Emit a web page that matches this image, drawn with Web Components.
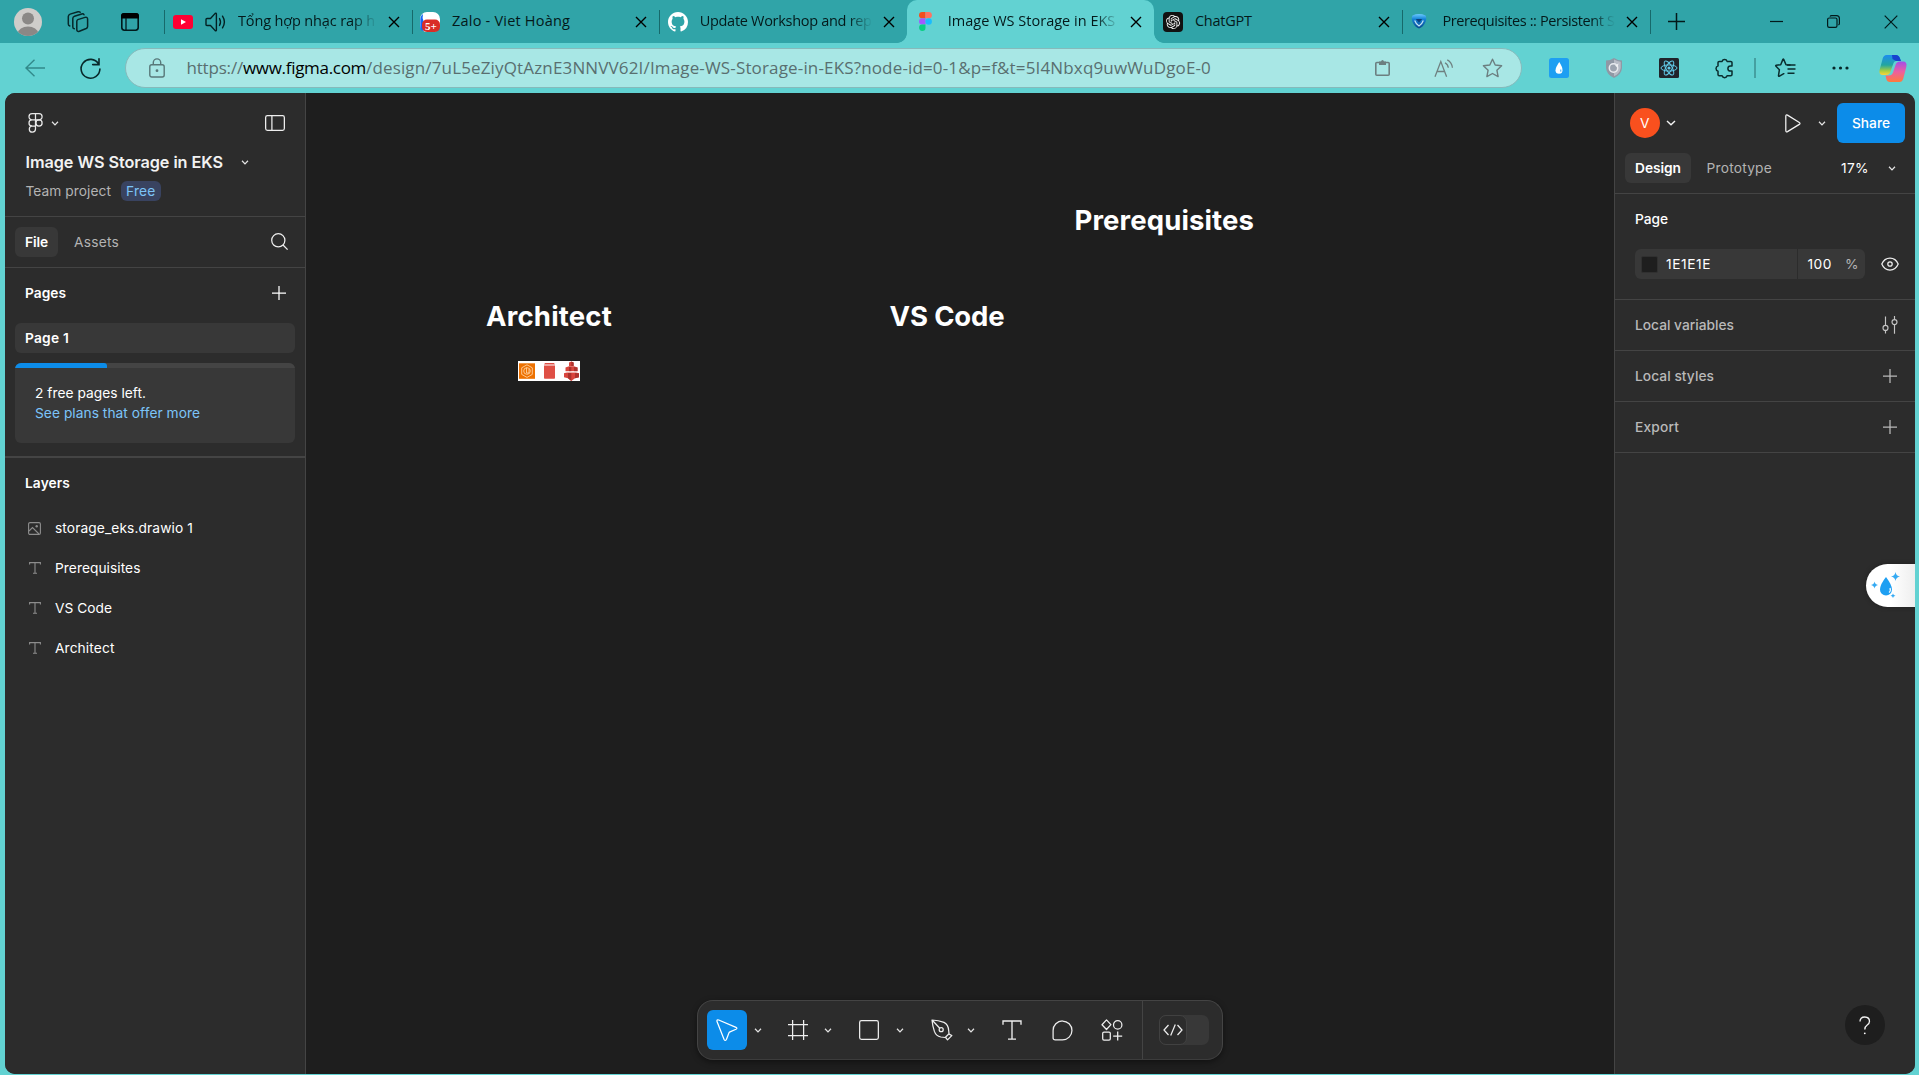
<!DOCTYPE html>
<html lang="en">
<head>
<meta charset="utf-8">
<title>Image WS Storage in EKS</title>
<style>
html,body{margin:0;height:100%;overflow:hidden;background:#62d2d2}
body{font-family:Inter,"Liberation Sans",sans-serif}
</style>
</head>
<body>
<design-window></design-window>
<script>
const ICONS = {
  user:[28,28,'<defs><clipPath id="c"><circle cx="14" cy="14" r="14"/></clipPath></defs><circle cx="14" cy="14" r="14" fill="#cfcdca"/><g clip-path="url(#c)" fill="#8b8886"><circle cx="14" cy="10.5" r="6"/><ellipse cx="14" cy="25" rx="10" ry="6.5"/></g>'],
  workspaces:[22,22,'<g fill="none" stroke="#06282a" stroke-width="1.5" stroke-linejoin="round" stroke-linecap="round"><path d="M10.8 8.6 18 6.4q2.6-.7 2.6 1.8v7.2q0 1.5-1.4 2.1l-6.8 2.7q-2.6.8-2.6-1.8v-8q0-1.4 1-1.8z"/><path d="M17 3.8q-.6-1.3-2.3-.8L7.5 5.300q-1.700.6-1.700 2.300v8.300q0 1.600 1.500 1.800"/><path d="M13.200 1.300q-.8-.9-2.200-.500L3.100 3.100Q1.300 3.700 1.300 5.500v7.500q0 1.600 1.500 1.900"/></g>'],
  vtabs:[18,18,'<rect x=".8" y=".8" width="16.400" height="16.400" rx="2.600" fill="none" stroke="#001a1c" stroke-width="1.600"/><path d="M0 5.500V3a3 3 0 0 1 3-3h12a3 3 0 0 1 3 3v2.500z" fill="#000"/><path d="M5 5v12" stroke="#001a1c" stroke-width="1.300"/>'],
  youtube:[20,14,'<rect width="20" height="14" rx="3" fill="#ff0033"/><path d="M8 4.200v5.600L13 7z" fill="#fff"/>'],
  speaker:[21,20,'<g fill="none" stroke="#032022" stroke-width="1.400" stroke-linejoin="round" stroke-linecap="round"><path d="M1 7.500q0-1 1-1h3.500L10.200 1.400q1-.8 1.200.4v16.400q-.2 1.200-1.200.4L5.500 13.500H2q-1 0-1-1z"/><path d="M14.500 6.500q2 3.500 0 7M17.500 4.200q3.800 5.800 0 11.600"/></g>'],
  close:[12,12,'<path d="M1 1l10 10M11 1 1 11" stroke="#000" stroke-width="1.400" fill="none"/>'],
  zalo:[20,20,'<rect width="20" height="20" rx="7" fill="#fff"/><path d="M3 2Q0 4 .3 9v7Q1 19 3.500 19V9Q2 6 3 2z" fill="#1468f5"/><rect x="2" y="7.500" width="18" height="12.500" rx="5" fill="#d92d27"/><text x="11" y="17.600" text-anchor="middle" font-family="Liberation Serif,serif" font-weight="700" font-size="11" fill="#fff">5+</text>'],
  github:[20,20,'<path transform="scale(1.25)" fill="#fff" d="M8 0C3.580 0 0 3.580 0 8c0 3.540 2.290 6.530 5.470 7.590.4.070.55-.17.55-.38 0-.19-.01-.82-.01-1.490-2.010.37-2.530-.49-2.690-.94-.09-.23-.48-.94-.82-1.130-.28-.15-.68-.52-.01-.53.63-.01 1.080.58 1.230.82.72 1.210 1.870.87 2.330.66.070-.52.28-.87.51-1.070-1.780-.2-3.640-.89-3.640-3.950 0-.87.31-1.590.82-2.150-.08-.2-.36-1.020.08-2.120 0 0 .67-.21 2.200.82.64-.18 1.320-.27 2-.27s1.360.09 2 .27c1.530-1.040 2.200-.82 2.200-.82.44 1.100.16 1.920.08 2.120.51.56.82 1.270.82 2.150 0 3.070-1.870 3.750-3.650 3.950.29.25.54.73.54 1.480 0 1.070-.01 1.930-.01 2.200 0 .21.15.46.55.38A8.010 8.010 0 0 0 16 8c0-4.420-3.580-8-8-8z"/>'],
  figma:[13,19,'<path d="M3.200 0h3.300v6.300H3.200a3.150 3.150 0 0 1 0-6.300z" fill="#f24e1e"/><path d="M6.500 0h3.200a3.150 3.150 0 0 1 0 6.300H6.500z" fill="#ff7262"/><path d="M3.200 6.300h3.300v6.300H3.200a3.150 3.150 0 0 1 0-6.300z" fill="#a259ff"/><circle cx="9.700" cy="9.450" r="3.200" fill="#1abcfe"/><path d="M3.200 12.600h3.300v3.200a3.200 3.200 0 1 1-3.300-3.200z" fill="#0acf83"/>'],
  gpt:[20,20,'<rect width="20" height="20" rx="4" fill="#111"/><path transform="translate(2.900 2.900) scale(.592)" fill="#f2f2f2" d="M22.282 9.821a5.985 5.985 0 0 0-.516-4.910 6.046 6.046 0 0 0-6.510-2.900A6.065 6.065 0 0 0 4.981 4.182a5.985 5.985 0 0 0-3.998 2.900 6.046 6.046 0 0 0 .743 7.097 5.980 5.980 0 0 0 .511 4.911 6.051 6.051 0 0 0 6.515 2.900A5.985 5.985 0 0 0 13.260 24a6.056 6.056 0 0 0 5.772-4.206 5.990 5.990 0 0 0 3.998-2.900 6.056 6.056 0 0 0-.747-7.073zM13.260 22.430a4.476 4.476 0 0 1-2.876-1.040l.141-.081 4.779-2.758a.795.795 0 0 0 .393-.681v-6.737l2.020 1.169a.071.071 0 0 1 .038.052v5.583a4.504 4.504 0 0 1-4.495 4.493zM3.600 18.304a4.470 4.470 0 0 1-.535-3.014l.142.085 4.783 2.759a.771.771 0 0 0 .780 0l5.843-3.369v2.332a.080.080 0 0 1-.033.062L9.740 19.950a4.500 4.500 0 0 1-6.140-1.646zM2.341 7.896a4.485 4.485 0 0 1 2.365-1.973V11.600a.766.766 0 0 0 .388.677l5.814 3.354-2.020 1.169a.076.076 0 0 1-.071 0l-4.830-2.787A4.504 4.504 0 0 1 2.341 7.872zm16.596 3.856-5.833-3.387L15.119 7.200a.076.076 0 0 1 .071 0l4.830 2.791a4.494 4.494 0 0 1-.676 8.105v-5.678a.790.790 0 0 0-.407-.667zm2.010-3.024-.141-.085-4.774-2.782a.776.776 0 0 0-.785 0L9.409 9.230V6.897a.066.066 0 0 1 .028-.062l4.830-2.787a4.499 4.499 0 0 1 6.680 4.660zM8.307 12.863l-2.020-1.164a.080.080 0 0 1-.038-.057V6.074a4.499 4.499 0 0 1 7.376-3.454l-.142.081-4.778 2.758a.795.795 0 0 0-.393.681zm1.097-2.366 2.602-1.500 2.607 1.500v2.999l-2.597 1.500-2.607-1.500z"/>'],
  shieldv:[16,18,'<defs><linearGradient id="g" x2="0" y2="1"><stop stop-color="#69c8ff"/><stop offset=".35" stop-color="#1583d6"/><stop offset="1" stop-color="#06488e"/></linearGradient></defs><path d="M1.500 2.500Q8-.3 14.500 2.500q1.500 2.500 0 6.500-2.200 5-6.500 6.500Q3.700 14 1.500 9 0 5 1.500 2.500z" fill="url(#g)"/><path d="M3.700 7.500q1.300 3.700 4.300 5.500 3-1.800 4.300-5.500" fill="none" stroke="#c4e2f5" stroke-width="1.200"/><path d="M4.800 6h6.400L8 9.500z" fill="#083f7d"/>'],
  newtab:[17,17,'<path d="M8.500 0v17M0 8.500h17" stroke="#02191a" stroke-width="1.500"/>'],
  minimize:[13,13,'<path d="M0 6.500h13" stroke="#02191a" stroke-width="1.200"/>'],
  restore:[13,13,'<rect x=".6" y="3" width="9.400" height="9.400" rx="1.600" fill="none" stroke="#02191a" stroke-width="1.200"/><path d="M3 1.600Q3.400.6 4.600.6H9.500Q12.400.6 12.400 3.500v5q0 1-1 1.500" fill="none" stroke="#02191a" stroke-width="1.200"/>'],
  winclose:[14,14,'<path d="M.7.7l12.600 12.600M13.300.7.7 13.300" stroke="#02191a" stroke-width="1.200"/>'],
  back:[20,18,'<path d="M9.500.8 1 9l8.500 8.200M1 9h19" fill="none" stroke="#32898a" stroke-width="1.400"/>'],
  reload:[21,21,'<path d="M18.600 6A9.400 9.400 0 1 0 19.900 11M19 .800v5.800h-6.300" fill="none" stroke="#08282a" stroke-width="1.600" stroke-linecap="round"/>'],
  lock:[16,20,'<g fill="none" stroke="#587879" stroke-width="1.400"><rect x=".8" y="6.700" width="14.400" height="12.300" rx="2"/><path d="M4.300 6.700V4.600a3.700 3.700 0 0 1 7.400 0v2.100"/></g><circle cx="8" cy="12.700" r="1.400" fill="#587879"/>'],
  clip:[15,16,'<rect x=".8" y="2.500" width="13.400" height="12.700" rx="1" fill="none" stroke="#6c7f80" stroke-width="1.600"/><path d="M4 1.500h2Q6.300 0 7.500 0T9 1.500h2V5H4z" fill="#6c7f80"/>'],
  read:[20,19,'<g fill="none" stroke="#6f8080" stroke-width="1.300"><path d="M1 17.800 6.800 2.500l5.800 15.300M3 12.500h7.600M11 3.800q3 1.700 3.300 5M13.300.8q4.600 2.400 5.100 8"/></g>'],
  star:[21,20,'<path d="M10.500 1.200 13.200 7l6.400.8-4.700 4.400 1.200 6.400-5.600-3.100-5.600 3.100 1.200-6.400L1.400 7.800 7.800 7z" fill="none" stroke="#6c7f80" stroke-width="1.400" stroke-linejoin="round"/>'],
  drop:[20,20,'<rect width="20" height="20" rx="2.500" fill="#1e9ff2"/><path d="M10.300 4q3.200 5 3.200 8.200a3.500 3.500 0 0 1-7 0Q6.700 9 10.300 4z" fill="#fff"/><path d="M11.800 11.500v2.200" stroke="#1e9ff2" stroke-width=".9"/>'],
  shield:[16,20,'<path d="M8 0q4 2.500 8 2.500V10q-.5 6.500-8 10Q.500 16.500 0 10V2.500Q4 2.500 8 0z" fill="#8f98a5"/><path d="M8 1.500q3.500 2 6.700 2.200V10q-.7 5.300-6.700 8.300z" fill="#b7bcc6"/><circle cx="7.500" cy="10" r="4.200" fill="#9ba3af" stroke="#e8ebef" stroke-width="1.500"/><path d="M9 7.500l3.500-2-1 4z" fill="#eef0f3"/>'],
  react:[20,20,'<rect width="20" height="20" rx="1.500" fill="#20232a"/><g fill="none" stroke="#61c9e8" stroke-width="1"><ellipse cx="10" cy="10" rx="8" ry="3.100"/><ellipse cx="10" cy="10" rx="8" ry="3.100" transform="rotate(60 10 10)"/><ellipse cx="10" cy="10" rx="8" ry="3.100" transform="rotate(120 10 10)"/></g><circle cx="10" cy="10" r="1.600" fill="#61c9e8"/>'],
  puzzle:[19,21,'<path d="M4.200 3.400h2.900a2.600 2.600 0 0 1 5 0h3.600q1.300 0 1.300 1.200v3.300h-1.500a2.600 2.600 0 0 0 0 5.200H17v3.500q0 1.200-1.300 1.200h-3.600a2.600 2.600 0 0 1-5 0H4.200Q3 17.800 3 16.600v-3.500a2.700 2.700 0 0 1 0-5.200V4.600q0-1.200 1.200-1.200z" fill="none" stroke="#0a2d2e" stroke-width="1.500" stroke-linejoin="round"/>'],
  favs:[21,20,'<path d="M15 7 11 6.800 8.700 1.400Q8.300.8 7.900 1.400L5.700 6.700l-4.500.6q-.9.300-.2 1L4.400 11.700l-.9 6q.1 1 1 .5l4.300-2.500" fill="none" stroke="#0a2d2e" stroke-width="1.500" stroke-linejoin="round" stroke-linecap="round"/><path d="M12 7h8.500M12.500 11H20.500M12.500 15.200h7" stroke="#0a2d2e" stroke-width="1.400"/>'],
  dots:[17,4,'<g fill="#06282a"><circle cx="2" cy="2" r="1.600"/><circle cx="8.500" cy="2" r="1.600"/><circle cx="15" cy="2" r="1.600"/></g>'],
  copilot:[28,27,'<defs><linearGradient id="a" x2="0" y2="1"><stop stop-color="#1d8cf0"/><stop offset=".5" stop-color="#22a6a0"/><stop offset=".8" stop-color="#a8cf3e"/><stop offset="1" stop-color="#ffd23a"/></linearGradient><linearGradient id="b" x2="0" y2="1"><stop stop-color="#a34ee8"/><stop offset=".5" stop-color="#ec5fa0"/><stop offset="1" stop-color="#ff7a3c"/></linearGradient></defs><path d="M7.500 0H17q3 0 4 3.500L22 6h-4.500q-2.500 0-3.300 3l-2.700 7.500Q10.500 20 7 20H4Q-.5 20 .6 15L3.700 3.500Q4.700 0 7.500 0z" fill="url(#a)"/><path d="M13 0h4q3 0 4 3.500L22 6h-5l-3.500-2z" fill="#1743cf"/><path d="M20.500 27H11q-3 0-3.700-3L6.500 20.500H10q3 0 4-3L16.500 10q1-3.500 4.500-3.500h3q4.500 0 3.300 5.500l-3 11.500Q23.300 27 20.500 27z" fill="url(#b)"/>'],
  figmaline:[15,20,'<g fill="none" stroke="#e8e8e8" stroke-width="1.250"><path d="M4.100.7H11a3.100 3.100 0 0 1 0 6.200H4.100a3.100 3.100 0 0 1 0-6.200zM7.500.7v15.400a3.100 3.100 0 1 1-3.200-3.100h3.200M7.500 6.900H4.100a3.100 3.100 0 0 0 0 6.200"/><circle cx="11" cy="10" r="3.100"/></g>'],
  chev:[8,5,'<path d="M1 .8 4 3.900 7 .8" fill="none" stroke="#e4e4e4" stroke-width="1.250"/>'],
  chevbig:[10,6,'<path d="M1 1 5 4.800 9 1" fill="none" stroke="#f2f2f2" stroke-width="1.400"/>'],
  panel:[20,16,'<rect x=".65" y=".65" width="18.700" height="14.700" rx="1.800" fill="none" stroke="#eee" stroke-width="1.250"/><path d="M6.900.6v14.800" stroke="#eee" stroke-width="1.250"/>'],
  search:[17,17,'<g fill="none" stroke="#eee" stroke-width="1.250"><circle cx="7.300" cy="7.300" r="6.600"/><path d="m12 12 4.600 4.600"/></g>'],
  plus:[14,14,'<path d="M7 0v14M0 7h14" stroke="currentColor" stroke-width="1.250"/>'],
  image:[13,13,'<g fill="none" stroke="#8d8d8d" stroke-width="1.100"><rect x=".6" y=".6" width="11.800" height="11.800" rx="1.400"/><path d="m1 9 3.500-3.500 6.500 6.500"/></g><circle cx="8.700" cy="4.300" r="1.200" fill="#8d8d8d"/>'],
  text:[12,12,'<path d="M.6 2.600V.6h10.800v2M6 .6v10.600M4 11.300h4" fill="none" stroke="#8d8d8d" stroke-width="1.100"/>'],
  play:[16,19,'<path d="M.8 2.200q0-2 1.700-1.100l11.800 7.300q1.400 1 0 2L2.500 17.600Q.8 18.500.8 16.500z" fill="none" stroke="#f2f2f2" stroke-width="1.250"/>'],
  eye:[18,14,'<g fill="none" stroke="#eee" stroke-width="1.250"><path d="M.8 7Q3.300 1 9 1t8.200 6Q14.700 13 9 13T.8 7z"/><circle cx="9" cy="7" r="2.200"/></g>'],
  vars:[16,18,'<g fill="none" stroke="#c4c4c4" stroke-width="1.150"><path d="M3.500.5v8.800M3.500 14.500v3M12.500 0v3.500M12.500 8.700v9"/><circle cx="3.500" cy="11.900" r="2.500"/><circle cx="12.500" cy="6.100" r="2.500"/></g>'],
  cursor:[22,22,'<path d="M1 2.500Q.6.300 2.700 1L20 8.300q1.800 1.100 0 2L14 12.900q-.8.400-1.100 1.100L10.400 20.500q-1.200 1.800-2.300 0z" fill="none" stroke="#fff" stroke-width="1.250" stroke-linejoin="round"/>'],
  frame:[20,20,'<path d="M4.600 0v20M15.600 0v20M0 4.600h20M0 15.600h20" stroke="#eee" stroke-width="1.250"/>'],
  rect:[20,20,'<rect x=".65" y=".65" width="18.700" height="18.700" rx="1.800" fill="none" stroke="#eee" stroke-width="1.250"/>'],
  pen:[22,22,'<g fill="none" stroke="#eee" stroke-width="1.250" stroke-linejoin="round"><path d="M1 1q6.500.3 12 2.400 4.500 2.400 4.700 8.400l.3 3-3.800 3.700-4.400-.5Q5 17 3.400 12.400 1.500 6.500 1 1zM1.500 1.500l7.500 8"/><circle cx="10.200" cy="10.700" r="2"/><path d="m18 15 2.800 1.600-4.300 4.300-1.900-2.600"/></g>'],
  bigtext:[20,20,'<path d="M1 4.800V1h18v3.800M10 1v18M6 19.100h8" fill="none" stroke="#eee" stroke-width="1.350"/>'],
  comment:[21,21,'<path d="M10.500 1a9.400 9.400 0 1 1 0 18.900H3.200q-2.100 0-2.100-2v-7.400A9.400 9.400 0 0 1 10.500 1z" fill="none" stroke="#eee" stroke-width="1.250"/>'],
  parts:[22,22,'<g fill="none" stroke="#eee" stroke-width="1.250" stroke-linejoin="round"><path d="m5.500.9 4.400 4.800-4.400 4.800L1 5.700z"/><circle cx="16.700" cy="5.900" r="4.200"/><rect x="1.700" y="13" width="7.600" height="8" rx="1.300"/><path d="M16.700 12.500V21.500M12.200 17h9"/></g>'],
  code:[20,12,'<path d="M5.500 1 1 6l4.500 5M14.500 1 19 6l-4.500 5M12.300.500 7.700 11.500" fill="none" stroke="#eee" stroke-width="1.250"/>'],
  sparkle:[30,28,'<path d="M15 5q6 8 6 12.500a6 6 0 0 1-12 0Q9.300 12 15 5z" fill="#1e9ff2"/><path d="M19 16q1 3-1 4.500" stroke="#fff" stroke-width="1.200" fill="none"/><path d="M24.500 0q.6 4 4.500 4.500-3.900.6-4.500 4.500-.6-3.900-4.500-4.500Q23.900 4 24.500 0zM3.500 9.500q.4 2.900 3.500 3.500-3 .5-3.500 3.500Q3 13.500 0 13q3-.5 3.500-3.500zM22 21.500q.3 1.800 2.500 2.200-2.200.4-2.500 2.300-.4-1.900-2.500-2.300 2.100-.4 2.500-2.200z" fill="#35aaf3"/>'],
  help:[12,19,'<path d="M1 5.500Q1 1 5.700 1t4.800 4.300q0 2.200-2.300 3.700-2.400 1.600-2.400 4.400" fill="none" stroke="#f2f2f2" stroke-width="1.350"/><circle cx="5.800" cy="17.300" r=".9" fill="#fff"/>'],
  diagram:[62,20,'<rect width="62" height="20" fill="#fff"/><rect x="1" y="2.300" width="16" height="15.500" fill="#ed7100"/><g fill="none" stroke="#ffd0a0" stroke-width=".9"><path d="m9 3.800 5.300 3v6.600L9 16.400l-5.300-3V6.800z"/><circle cx="9" cy="10" r="3.300"/><path d="M8.500 6.500v5.500h2.500V8"/></g><path d="M27 2h9l1 1.500H26zM26 4.500h11V17q0 .8-.8.800h-9.400q-.8 0-.8-.8z" fill="#df4f45"/><path d="M51 1.500 53.300.5l2.300 1V5H51zM47.500 6.500l3.500-1.300h5l3.500 1.300v4H47.500zM46 12.200l3-1h9l3 1v4l-4 1-3.700 2.800-3.300-2.800-4-1z" fill="#d9453d"/><path d="M53.300.5l2.300 1V5h-2.300zM51 6h2.300v4.500H51zM56 6l3.500.5v4H56zM50 12h3.300v8L50 17.200zM57 12l4 .5v3.700l-4 1z" fill="#ac332d"/><path d="M45 10.900h17" stroke="#fff" stroke-width="1"/>'],
};

function define(tag, css, html, ready) {
  const t = document.createElement('template');
  t.innerHTML = `<style>*{box-sizing:border-box}${css}</style>${html}`;
  customElements.define(tag, class extends HTMLElement {
    connectedCallback() {
      if (this.shadowRoot) return;
      this.attachShadow({mode: 'open'}).append(t.content.cloneNode(true));
      if (ready) ready(this, this.shadowRoot);
    }
  });
}

/* Inline icon, sized from its own drawing grid */
define('ui-icon', ':host{display:block;flex:none;line-height:0}svg{display:block;overflow:visible}', '', (el, root) => {
  const [w, h, body] = ICONS[el.getAttribute('name')];
  root.innerHTML += `<svg width="${w}" height="${h}" viewBox="0 0 ${w} ${h}">${body}</svg>`;
});

/* Fixed-width cell that centres its content */
define('ui-cell', ':host{display:flex;flex:none;align-items:center;justify-content:center;height:100%}', '<slot></slot>',
  el => { el.style.width = el.getAttribute('w') + 'px'; });

/* Single line of text whose tracking is tuned so the line takes a given width */
define('fit-text', ':host{display:block;flex:none;white-space:pre}span{display:inline-block}', '<span><slot></slot></span>', (el, root) => {
  const s = root.querySelector('span'), n = [...el.textContent].length;
  const w = +el.getAttribute('w');
  s.style.letterSpacing = (w - s.getBoundingClientRect().width) / n + 'px';
  el.style.width = w + 'px';
});

define('browser-tab', `
  :host{display:flex;flex:none;width:247.600px;height:43px;align-items:center;position:relative;padding-left:8.500px;
    font:14.500px "Open Sans","Noto Sans",sans-serif;color:#04191a}
  :host::before{content:"";position:absolute;left:0;top:10px;width:1px;height:24px;background:#17696b}
  :host([active]){background:#62d2d2;border-radius:10px 10px 0 0;padding-left:12px}
  :host([active])::before,:host([after])::before{display:none}
  .l,.r{display:none;position:absolute;bottom:0;width:10px;height:10px}
  :host([active]) .l,:host([active]) .r{display:block}
  .l{left:-10px;background:radial-gradient(circle at 0 0,transparent 9.500px,#62d2d2 10.200px)}
  .r{right:-10px;background:radial-gradient(circle at 100% 0,transparent 9.500px,#62d2d2 10.200px)}
  .t{flex:1;display:flex;height:25px;line-height:24px;overflow:hidden}
  :host([fade]) .t{-webkit-mask-image:linear-gradient(90deg,#000 calc(100% - 24px),transparent)}
  .i{display:flex;align-items:center;flex:none}
  .x{display:flex;width:35px;justify-content:center;flex:none;padding:1px 1px 0 0}
`, '<i class="l"></i><i class="r"></i><div class="i"><slot name="icon"></slot></div><div class="t"><slot></slot></div><div class="x"><ui-icon name="close"></ui-icon></div>',
  (el, root) => { root.querySelector('.i').style.width = el.getAttribute('lead') + 'px'; });

define('tab-strip', `
  :host{display:flex;height:43px;background:#30a4a8;align-items:center;flex:none;overflow:hidden}
  .sep{width:1px;height:24px;background:#17696b}
  .two{display:flex;align-items:center;gap:12px}
`, `
  <ui-cell w="56"><ui-icon name="user"></ui-icon></ui-cell>
  <ui-cell w="44"><ui-icon name="workspaces"></ui-icon></ui-cell>
  <ui-cell w="60"><ui-icon name="vtabs"></ui-icon></ui-cell><ui-cell w="4"></ui-cell>
  <browser-tab lead="65.500" fade><div slot="icon" class="two"><ui-icon name="youtube"></ui-icon><ui-icon name="speaker"></ui-icon></div><fit-text w="137">Tổng hợp nhạc rap h</fit-text></browser-tab>
  <browser-tab lead="32"><ui-icon slot="icon" name="zalo"></ui-icon><fit-text w="118">Zalo - Viet Hoàng</fit-text></browser-tab>
  <browser-tab lead="32" fade><ui-icon slot="icon" name="github"></ui-icon><fit-text w="172">Update Workshop and rep</fit-text></browser-tab>
  <browser-tab lead="29" fade active><ui-icon slot="icon" name="figma"></ui-icon><fit-text w="176">Image WS Storage in EKS -</fit-text></browser-tab>
  <browser-tab lead="32" after><ui-icon slot="icon" name="gpt"></ui-icon><fit-text w="57">ChatGPT</fit-text></browser-tab>
  <browser-tab lead="32" fade><ui-icon slot="icon" name="shieldv" style="margin-left:1px"></ui-icon><fit-text w="172">Prerequisites :: Persistent S</fit-text></browser-tab>
  <i class="sep"></i>
  <ui-cell w="53"><ui-icon name="newtab"></ui-icon></ui-cell>
  <ui-cell w="45"></ui-cell>
  <ui-cell w="57"><ui-icon name="minimize"></ui-icon></ui-cell>
  <ui-cell w="57"><ui-icon name="restore"></ui-icon></ui-cell>
  <ui-cell w="57"><ui-icon name="winclose"></ui-icon></ui-cell>
`);

define('address-bar', `
  :host{display:flex;height:50px;flex:none;align-items:center;background:#62d2d2}
  .pill{display:flex;align-items:center;width:1397px;height:40px;border-radius:20px;background:#a8e7e5;border:1px solid #86babb}
  .url{display:flex;flex:none;width:1174px;font:17px/24px "Open Sans","Noto Sans",sans-serif;color:#596f70;padding-bottom:1px}
  .host{color:#000}
  .sep{width:1.500px;height:20px;background:#45a0a1}
`, `
  <ui-cell w="70"><ui-icon name="back"></ui-icon></ui-cell>
  <ui-cell w="40"><ui-icon name="reload"></ui-icon></ui-cell><ui-cell w="15"></ui-cell>
  <div class="pill">
    <ui-cell w="60.500" style="padding-left:2px"><ui-icon name="lock"></ui-icon></ui-cell>
    <div class="url"><fit-text w="56.500">https://</fit-text><fit-text class="host" w="123">www.figma.com</fit-text><fit-text w="845">/design/7uL5eZiyQtAznE3NNVV62I/Image-WS-Storage-in-EKS?node-id=0-1&amp;p=f&amp;t=5I4Nbxq9uwWuDgoE-0</fit-text></div>
    <ui-cell w="44"><ui-icon name="clip"></ui-icon></ui-cell>
    <ui-cell w="15"></ui-cell>
    <ui-cell w="48"><ui-icon name="read"></ui-icon></ui-cell>
    <ui-cell w="50"><ui-icon name="star"></ui-icon></ui-cell>
  </div>
  <ui-cell w="10"></ui-cell>
  <ui-cell w="54"><ui-icon name="drop"></ui-icon></ui-cell>
  <ui-cell w="56"><ui-icon name="shield"></ui-icon></ui-cell>
  <ui-cell w="54"><ui-icon name="react"></ui-icon></ui-cell>
  <ui-cell w="56"><ui-icon name="puzzle"></ui-icon></ui-cell>
  <ui-cell w="6"><i class="sep"></i></ui-cell>
  <ui-cell w="54"><ui-icon name="favs"></ui-icon></ui-cell>
  <ui-cell w="56"><ui-icon name="dots"></ui-icon></ui-cell>
  <ui-cell w="50"><ui-icon name="copilot"></ui-icon></ui-cell>
`);

define('layer-row', `
  :host{display:flex;height:40px;align-items:center;font-size:13.750px;color:#fff}
  div{width:50px;padding-left:16px;display:flex;justify-content:center;padding-right:7px}
`, '<div><slot name="icon"></slot></div><slot></slot>');

define('side-left', `
  :host{display:flex;flex-direction:column;width:301px;flex:none;background:#2c2c2c;border-right:1px solid #444;color:#fff;font-size:13.750px}
  .row{display:flex;align-items:center;flex:none}
  .top{height:60px;padding:0 20px 0 23px;gap:8px}
  .grow{flex:1}
  .name{height:19px;padding-left:20.500px;font-size:16.250px;font-weight:600;color:#f2f2f2}
  .name fit-text{padding-bottom:1px}
  .team{height:45px;padding:0 0 7px 20.500px;color:#b3b3b3;gap:10px;border-bottom:1px solid #444}
  .free{background:#394360;color:#7cc4f8;border-radius:6px;height:20px;display:flex;align-items:center;padding:0 5px}
  .tabs{height:51px;border-bottom:1px solid #444;padding:0 17px 1px 10px;color:#b3b3b3}
  .on{background:#383838;color:#fff;font-weight:600;border-radius:6px;height:30px;display:flex;align-items:center;padding:0 10px;margin-right:16px}
  .pages{height:51px;padding:0 19px 2px 20px;font-weight:600}
  .page{height:30px;margin:4px 10px 10px;border-radius:6px;background:#383838;padding-left:10px;font-weight:600}
  .card{margin:0 10px;height:80px;border-radius:6px;background:#383838;overflow:hidden;line-height:20px;flex:none}
  .bar{height:5px;background:#444;margin-bottom:15px}.bar i{display:block;width:92px;height:5px;background:#0c8ce9;border-radius:0 3px 0 0}
  .card fit-text{margin-left:20px}.link{color:#7cc4f8}
  hr{height:2px;background:#444;border:0;margin:13px 0 0;flex:none}
  .layers{height:50px;padding-left:20px;font-weight:600}
`, `
  <div class="row top"><ui-icon name="figmaline"></ui-icon><ui-icon name="chev"></ui-icon><span class="grow"></span><ui-icon name="panel"></ui-icon></div>
  <div class="row name"><fit-text w="197.500">Image WS Storage in EKS</fit-text><ui-cell w="44.500"><ui-icon name="chev"></ui-icon></ui-cell></div>
  <div class="row team"><fit-text w="85.500">Team project</fit-text><span class="free"><fit-text w="29.500">Free</fit-text></span></div>
  <div class="row tabs"><span class="on"><fit-text w="23">File</fit-text></span><fit-text w="45">Assets</fit-text><span class="grow"></span><ui-icon name="search"></ui-icon></div>
  <div class="row pages"><fit-text w="41">Pages</fit-text><span class="grow"></span><ui-icon name="plus"></ui-icon></div>
  <div class="row page"><fit-text w="44">Page 1</fit-text></div>
  <div class="card"><div class="bar"><i></i></div><fit-text w="111">2 free pages left.</fit-text><fit-text class="link" w="165">See plans that offer more</fit-text></div>
  <hr>
  <div class="row layers"><fit-text w="45">Layers</fit-text></div>
  <layer-row><ui-icon slot="icon" name="image"></ui-icon><fit-text w="138">storage_eks.drawio 1</fit-text></layer-row>
  <layer-row><ui-icon slot="icon" name="text"></ui-icon><fit-text w="85.500">Prerequisites</fit-text></layer-row>
  <layer-row><ui-icon slot="icon" name="text"></ui-icon><fit-text w="57">VS Code</fit-text></layer-row>
  <layer-row><ui-icon slot="icon" name="text"></ui-icon><fit-text w="59.500">Architect</fit-text></layer-row>
`);

define('side-right', `
  :host{display:flex;flex-direction:column;width:301px;flex:none;background:#2c2c2c;border-left:1px solid #444;color:#fff;font-size:13.750px}
  .row{display:flex;align-items:center;flex:none}.grow{flex:1}
  .top{height:60px;padding:0 10px 0 15px}
  .av{width:30px;height:30px;border-radius:50%;background:#f9501e;display:flex;align-items:center;justify-content:center}
  .share{background:#0c8ce9;border-radius:6px;height:40px;width:68px;display:flex;align-items:center;justify-content:center;font-weight:500}
  .tabs{height:41px;padding:0 1px 10px 10px;border-bottom:1px solid #444}
  .on{background:#383838;border-radius:6px;height:30px;display:flex;align-items:center;padding:0 10px;margin-right:15.500px;font-weight:600}
  .dim{color:#b3b3b3}
  .page{height:50px;padding-left:20px;font-weight:550}
  .fill{height:56px;padding:0 0 20px 20px;border-bottom:1px solid #444;align-items:flex-end}
  .field{display:flex;flex:none;align-items:center;width:230px;height:30px;border-radius:6px;background:#383838}
  .sw{width:17px;height:17px;margin:0 8px 0 6px;background:#1e1e1e;border:1px solid #303030;border-radius:2px}
  .div{width:1px;height:30px;background:#2c2c2c;margin-right:10px}
  .sec{height:51px;border-bottom:1px solid #444;padding:0 0 0 20px;color:#b9b9b9;font-weight:550}
`, `
  <div class="row top"><span class="av"><fit-text w="10">V</fit-text></span><ui-cell w="22"><ui-icon name="chevbig"></ui-icon></ui-cell><span class="grow"></span><ui-icon name="play"></ui-icon><ui-cell w="36.500" style="padding-left:7px"><ui-icon name="chev"></ui-icon></ui-cell><span class="share"><fit-text w="38">Share</fit-text></span></div>
  <div class="row tabs"><span class="on"><fit-text w="46">Design</fit-text></span><fit-text class="dim" w="65.500">Prototype</fit-text><span class="grow"></span><fit-text w="28">17%</fit-text><ui-cell w="45"><ui-icon name="chev"></ui-icon></ui-cell></div>
  <div class="row page"><fit-text w="33">Page</fit-text></div>
  <div class="row fill"><span class="field"><i class="sw"></i><fit-text w="45">1E1E1E</fit-text><span class="grow"></span><i class="div"></i><fit-text w="24.500">100</fit-text><span style="width:13px"></span><fit-text class="dim" w="12">%</fit-text><span style="width:8px"></span></span><ui-cell w="50" style="height:30px"><ui-icon name="eye"></ui-icon></ui-cell></div>
  <div class="row sec"><fit-text w="99">Local variables</fit-text><span class="grow"></span><ui-cell w="50"><ui-icon name="vars"></ui-icon></ui-cell></div>
  <div class="row sec"><fit-text w="79">Local styles</fit-text><span class="grow"></span><ui-cell w="51"><ui-icon name="plus"></ui-icon></ui-cell></div>
  <div class="row sec"><fit-text w="44">Export</fit-text><span class="grow"></span><ui-cell w="51"><ui-icon name="plus"></ui-icon></ui-cell></div>
`);

define('tool-bar', `
  :host{display:flex;align-items:center;width:526px;height:60px;border-radius:16px;background:#2c2c2c;border:1px solid #444;border-bottom-color:#3c3c3c;padding-left:9px;box-shadow:0 2px 6px rgba(0,0,0,.45)}
  .on{width:40px;height:40px;border-radius:6px;background:#0c8ce9;display:flex;align-items:center;justify-content:center;flex:none}
  .group{display:flex;align-items:center;flex:none;width:71px;padding-left:20px}
  .group ui-icon:last-child{margin-left:auto}
  .sep{width:1px;height:58px;background:#444;flex:none}
  .sw{width:50px;height:30px;border-radius:7px;background:#383838;margin-left:16px;display:flex;align-items:center}
  .th{width:28px;height:30px;border-radius:7px;background:#2c2c2c;border:1px solid #414141;display:flex;align-items:center;justify-content:center}
`, `
  <span class="on"><ui-icon name="cursor"></ui-icon></span>
  <ui-cell w="21"><ui-icon name="chev"></ui-icon></ui-cell>
  <span class="group"><ui-icon name="frame"></ui-icon><ui-icon name="chev" style="margin-right:7px"></ui-icon></span>
  <span class="group"><ui-icon name="rect"></ui-icon><ui-icon name="chev" style="margin-right:6px"></ui-icon></span>
  <span class="group" style="padding-left:21px"><ui-icon name="pen"></ui-icon><ui-icon name="chev" style="margin-right:6px"></ui-icon></span>
  <ui-cell w="61"><ui-icon name="bigtext"></ui-icon></ui-cell>
  <ui-cell w="40"><ui-icon name="comment"></ui-icon></ui-cell>
  <ui-cell w="60"><ui-icon name="parts"></ui-icon></ui-cell>
  <i class="sep"></i><span class="sw"><span class="th"><ui-icon name="code"></ui-icon></span></span>
`);

define('design-canvas', `
  :host{display:block;flex:1;background:#1e1e1e;position:relative;color:#fff;font-weight:700;font-size:27.500px;line-height:34px}
  fit-text,.img{position:absolute}
  tool-bar{position:absolute;left:391px;bottom:14px}
`, `
  <fit-text w="179.500" style="left:768.500px;top:110px">Prerequisites</fit-text>
  <fit-text w="126" style="left:180px;top:206px">Architect</fit-text>
  <fit-text w="115" style="left:583.500px;top:206px">VS Code</fit-text>
  <ui-icon class="img" name="diagram" style="left:212px;top:268px"></ui-icon>
  <tool-bar></tool-bar>
`);

define('design-window', `
  :host{display:flex;flex-direction:column;height:1075px;width:1919px;background:#62d2d2}
  .app{display:flex;height:981px;margin:0 4px 0 5px;border-radius:10px;overflow:hidden;position:relative;background:#2c2c2c}
  .help{position:absolute;right:30px;bottom:29px;width:40px;height:40px;border-radius:50%;background:#1e1e1e;display:flex;align-items:center;justify-content:center}
  .wid{position:absolute;right:0;top:471px;width:49px;height:43px;border-radius:22px 0 0 22px;background:linear-gradient(90deg,#fff 50%,#eee);display:flex;align-items:center;padding-left:5px;box-shadow:0 0 5px rgba(0,0,0,.3)}
`, `
  <tab-strip></tab-strip><address-bar></address-bar>
  <main class="app"><side-left></side-left><design-canvas></design-canvas><side-right></side-right>
    <div class="help"><ui-icon name="help"></ui-icon></div>
    <div class="wid"><ui-icon name="sparkle"></ui-icon></div>
  </main>
`);
</script>
</body>
</html>
